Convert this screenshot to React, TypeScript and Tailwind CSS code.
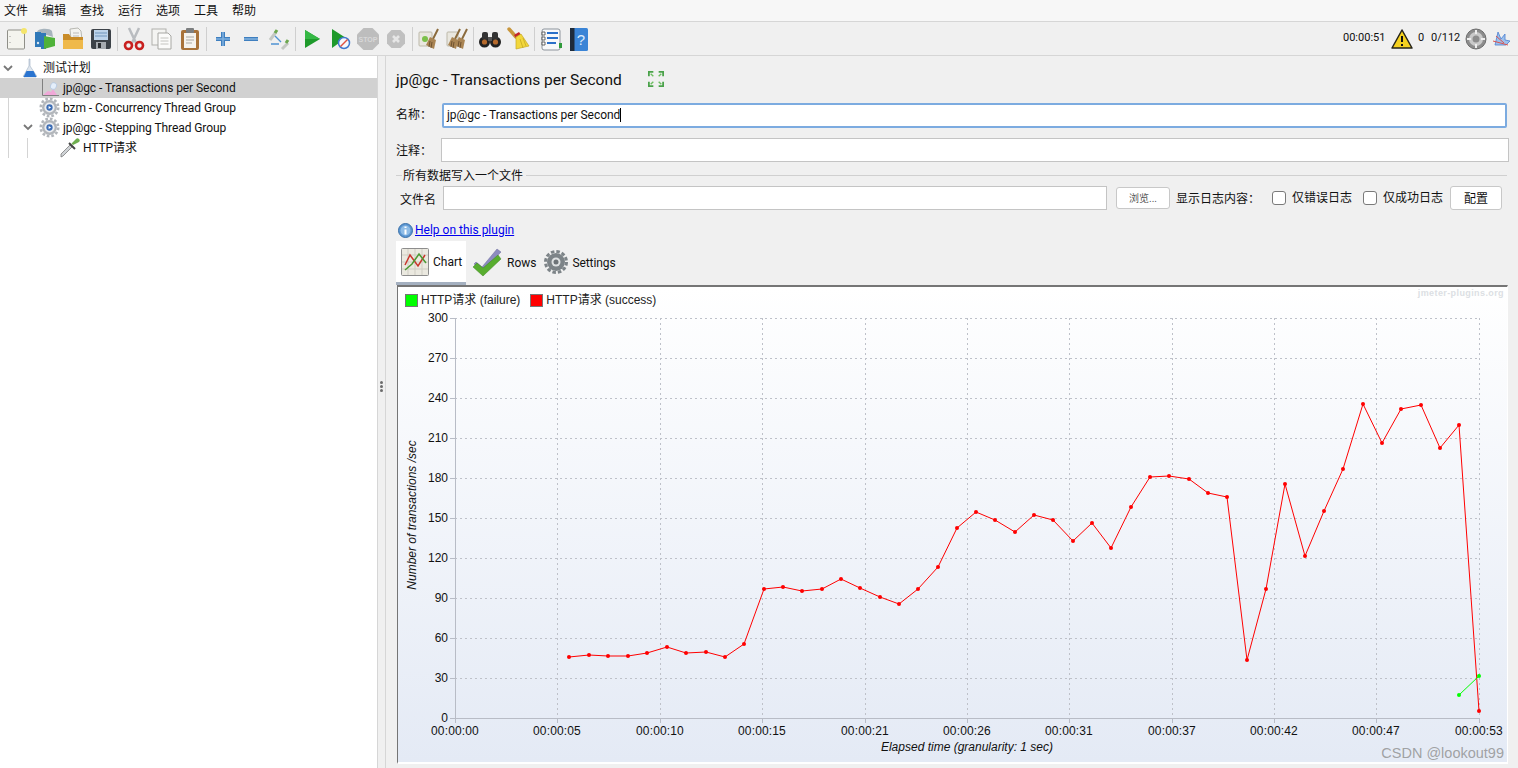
import type { ReactNode } from "react";

const menus = ["文件", "编辑", "查找", "运行", "选项", "工具", "帮助"];

const red = [
  [569, 657], [589, 655], [608, 656], [628, 656], [647, 653], [667, 647], [686, 653], [706, 652],
  [725, 657], [744, 644], [764, 589], [783, 587], [802, 591], [822, 589], [841, 579], [860, 588],
  [880, 597], [899, 604], [918, 589], [938, 567], [957, 528], [976, 512], [995, 520], [1015, 532],
  [1034, 515], [1053, 520], [1073, 541], [1092, 523], [1111, 548], [1131, 507], [1150, 477], [1169, 476],
  [1189, 479], [1208, 493], [1227, 497], [1247, 660], [1266, 589], [1285, 484], [1305, 556], [1324, 511],
  [1343, 469], [1363, 404], [1382, 443], [1401, 409], [1421, 405], [1440, 448], [1459, 425], [1479, 711],
];
const green = [[1459, 695], [1479, 676]];

const xTicks = [
  [455, "00:00:00"], [557, "00:00:05"], [660, "00:00:10"], [762, "00:00:15"], [865, "00:00:21"],
  [967, "00:00:26"], [1069, "00:00:31"], [1172, "00:00:37"], [1274, "00:00:42"], [1376, "00:00:47"], [1479, "00:00:53"],
] as const;
const yTicks = [300, 270, 240, 210, 180, 150, 120, 90, 60, 30, 0];

function Ico({ children, size = 24 }: { children: ReactNode; size?: number }) {
  return (
    <svg width={size} height={size} viewBox="0 0 24 24" className="shrink-0">
      {children}
    </svg>
  );
}

function Gear({ size = 22, c = "#b2b6bb" }: { size?: number; c?: string }) {
  return (
    <Ico size={size}>
      <circle cx="12" cy="12" r="8.500" fill={c} />
      <circle cx="12" cy="12" r="10" fill="none" stroke={c} strokeWidth="3" strokeDasharray="3 2.250" />
      <circle cx="12" cy="12" r="5.800" fill="#eceef1" />
      <circle cx="12" cy="12" r="3.600" fill="#3f6fb5" />
      <path d="M11 10.200l2.800 1.800-2.800 1.800z" fill="#fff" />
    </Ico>
  );
}

function Broom({ x = 10 }: { x?: number }) {
  return (
    <g>
      <path d={`M${x + 11} 2l-5 10`} stroke="#8a6a3c" strokeWidth="2" />
      <path d={`M${x + 3} 10l6 3-2 9-8-4z`} fill="#a98453" />
      <path d={`M${x + 3} 14l-1 6M${x + 5} 15l-1 6`} stroke="#6f5230" strokeWidth="1" />
    </g>
  );
}

const tools: ReactNode[] = [
  <Ico key="new">
    <rect x="2.500" y="3" width="17" height="19" rx="1" fill="#f4f4ee" stroke="#8f8f88" />
    <circle cx="19" cy="4" r="3" fill="#f5e56b" />
    <path d="M5 9v1M5 15v1" stroke="#999" />
  </Ico>,
  <Ico key="tmpl">
    <path d="M4 5c1-4 13-4 15-1l1 6-6-2H6z" fill="#a7b4bd" />
    <rect x="2" y="5" width="6" height="15" fill="#2f78b8" />
    <rect x="8" y="6" width="5" height="16" fill="#2f78b8" />
    <path d="M11 9l11 2v8l-11 3z" fill="#4fb23a" />
    <circle cx="5" cy="16" r="1.200" fill="#dbe8f2" />
  </Ico>,
  <Ico key="open">
    <path d="M9 2l8-1 3 3 1 9H10z" fill="#f3f3f0" stroke="#a9a9a2" strokeWidth="0.800" />
    <path d="M12 6h6M12 9h6" stroke="#bbb" />
    <path d="M2 7h6l2 3h12v11a1 1 0 01-1 1H3a1 1 0 01-1-1z" fill="#c98c28" />
    <path d="M2 13h20v8a1 1 0 01-1 1H3a1 1 0 01-1-1z" fill="#efb94a" />
  </Ico>,
  <Ico key="save">
    <rect x="2" y="2" width="20" height="20" rx="2" fill="#3c4248" />
    <rect x="5" y="3" width="14" height="10" fill="#bcd3ea" />
    <path d="M6 6h12M6 9h12" stroke="#6f94bb" />
    <rect x="7" y="15" width="10" height="7" fill="#a6abb0" />
    <rect x="9" y="16" width="3" height="5" fill="#2b2f33" />
  </Ico>,
  null,
  <Ico key="cut">
    <path d="M7 1l7 15M17 1l-7 15" stroke="#b9bcc0" strokeWidth="2.500" />
    <circle cx="6.500" cy="18.500" r="3.500" fill="none" stroke="#c8201f" strokeWidth="2.600" />
    <circle cx="17.500" cy="18.500" r="3.500" fill="none" stroke="#c8201f" strokeWidth="2.600" />
  </Ico>,
  <Ico key="copy">
    <rect x="2" y="2" width="14" height="16" fill="#f4f4f2" stroke="#b0b0ac" />
    <path d="M8 6h10l3 3v13H8z" fill="#fbfbfa" stroke="#a8a8a4" />
    <path d="M10.500 11h8M10.500 14h8M10.500 17h8" stroke="#c4c4c0" />
  </Ico>,
  <Ico key="paste">
    <rect x="3" y="3" width="18" height="20" rx="2" fill="#a8733a" />
    <rect x="6" y="6" width="12" height="15" fill="#f5f3ee" />
    <rect x="8" y="1" width="8" height="5" rx="1" fill="#7d7f80" />
    <path d="M8 10h8M8 13h8M8 16h6" stroke="#a9a9a4" />
  </Ico>,
  null,
  <Ico key="plus">
    <path d="M12 5v14M5 12h14" stroke="#3f7fbf" strokeWidth="4" />
    <path d="M12 5v14M5 12h14" stroke="#7fb0de" strokeWidth="1.600" />
  </Ico>,
  <Ico key="minus">
    <path d="M5 12h14" stroke="#3f7fbf" strokeWidth="4" />
    <path d="M5 12h14" stroke="#7fb0de" strokeWidth="1.600" />
  </Ico>,
  <Ico key="toggle">
    <path d="M3 13l6-8M15 22l6-6" stroke="#c4c8c2" strokeWidth="3" />
    <path d="M8 6l2-3M19 16l2-3" stroke="#6da84f" strokeWidth="3" />
    <path d="M8 9l6 6M4 17h8" stroke="#4f93d2" strokeWidth="1.400" fill="none" />
  </Ico>,
  null,
  <Ico key="run">
    <path d="M5 3l15 9-15 9z" fill="#1e9a2b" />
    <path d="M5 3l15 9H5z" fill="#35b845" />
  </Ico>,
  <Ico key="runno">
    <path d="M4 2l14 9-14 10z" fill="#1e9a2b" />
    <circle cx="16" cy="16" r="5.500" fill="#f5f7fb" stroke="#3f78cf" strokeWidth="1.500" />
    <path d="M12.500 19.500l7-7" stroke="#e0503f" strokeWidth="1.400" />
  </Ico>,
  <Ico key="stop">
    <path d="M7.500 1h9L23 7.500v9L16.500 23h-9L1 16.500v-9z" fill="#bdbdbd" />
    <text x="12" y="15" textAnchor="middle" fontSize="7" fontWeight="700" fill="#d8d8d8" fontFamily="Liberation Sans, sans-serif">STOP</text>
  </Ico>,
  <Ico key="shut">
    <path d="M7.500 3h9L21 7.500v9L16.500 21h-9L3 16.500v-9z" fill="#c0c0c0" />
    <path d="M9 9l6 6M15 9l-6 6" stroke="#e6e6e6" strokeWidth="2.600" />
  </Ico>,
  null,
  <Ico key="clear">
    <rect x="2" y="5" width="13" height="14" rx="1" fill="#e9e7df" stroke="#bdb9aa" />
    <circle cx="8" cy="12" r="3" fill="#7cc04a" />
    <Broom x={10} />
  </Ico>,
  <Ico key="clearall">
    <rect x="2" y="5" width="11" height="14" rx="1" fill="#e9e7df" stroke="#bdb9aa" />
    <Broom x={4} />
    <Broom x={11} />
  </Ico>,
  null,
  <Ico key="find">
    <circle cx="6.500" cy="15" r="5.500" fill="#222" />
    <circle cx="17.500" cy="15" r="5.500" fill="#222" />
    <rect x="4" y="5" width="6" height="8" rx="2" fill="#333" />
    <rect x="14" y="5" width="6" height="8" rx="2" fill="#333" />
    <rect x="10" y="10" width="4" height="4" fill="#555" />
    <circle cx="6.500" cy="15" r="2.600" fill="#b66a2c" />
    <circle cx="17.500" cy="15" r="2.600" fill="#b66a2c" />
  </Ico>,
  <Ico key="broom">
    <path d="M3 2l7 8" stroke="#c8963c" strokeWidth="3.500" strokeLinecap="round" />
    <path d="M8 8l5-3 2 3-5 3z" fill="#c4252a" />
    <path d="M10 10l5-3 8 12-13 3z" fill="#f2d73c" stroke="#c7a922" strokeWidth="0.700" />
    <path d="M14 12l3 9M17 11l3 8" stroke="#c7a922" strokeWidth="0.800" />
  </Ico>,
  null,
  <Ico key="list">
    <rect x="3" y="2" width="18" height="21" rx="2" fill="#f7f8fa" stroke="#8d949c" />
    <path d="M8 6h11M8 11h11M8 16h9" stroke="#2a6fc9" strokeWidth="1.800" />
    <path d="M3 5h3v3H3zM3 10h3v3H3zM3 15h3v3H3z" fill="#fff" stroke="#444" strokeWidth="0.800" />
    <rect x="20" y="16" width="3" height="5" fill="#2f9a3a" />
  </Ico>,
  <Ico key="help">
    <rect x="3" y="1" width="18" height="23" rx="1.500" fill="#3a84d6" />
    <rect x="3" y="1" width="4.500" height="23" fill="#1f2b3a" />
    <text x="14" y="18" textAnchor="middle" fontSize="15" fill="#dcebfb" fontFamily="Liberation Sans, sans-serif">?</text>
  </Ico>,
];

function Field({ className }: { className: string }) {
  return <div className={`bg-white border border-[#c4c4c4] ${className}`} />;
}

function Check({ label }: { label: string }) {
  return (
    <div className="flex items-center gap-[6px]">
      <span className="w-[14px] h-[14px] rounded-[3px] bg-white border border-[#7a7a7a]" />
      <span>{label}</span>
    </div>
  );
}

export default function App() {
  return (
    <div className="w-[1518px] h-[768px] overflow-hidden flex flex-col bg-[#f0f0f0] text-[#111] text-[12px] font-['Roboto','Noto_Sans_CJK_SC',sans-serif]">
      {/* menu */}
      <div className="h-[22px] shrink-0 flex items-center gap-[14px] pl-[4px] bg-[#f7f7f7] border-b border-[#d6d6d6]">
        {menus.map((m) => (
          <span key={m} className="w-[24px] text-[12px] leading-none whitespace-nowrap">{m}</span>
        ))}
      </div>

      {/* toolbar */}
      <div className="h-[34px] shrink-0 flex items-center pl-[3px] pr-[7px] border-b border-[#d6d6d6]">
        {tools.map((t, i) =>
          t ? (
            <div key={i} className="w-[28px] flex justify-center">{t}</div>
          ) : (
            <div key={i} className="w-[5px] h-[24px] flex justify-center">
              <div className="w-px bg-[#cfcfcf]" />
            </div>
          ),
        )}
        <div className="ml-auto flex items-center text-[11px]">
          <span className="w-[48px]">00:00:51</span>
          <svg width="22" height="20" viewBox="0 0 22 20" className="mr-[5px]">
            <path d="M11 1l10 18H1z" fill="#f6d21f" stroke="#26241a" strokeWidth="1.500" strokeLinejoin="round" />
            <path d="M11 7v6M11 15v2" stroke="#111" strokeWidth="2" />
          </svg>
          <span className="w-[13px]">0</span>
          <span className="w-[34px]">0/112</span>
          <svg width="22" height="22" viewBox="0 0 22 22" className="mr-[4px]">
            <circle cx="11" cy="11" r="10" fill="#8c8c8c" stroke="#6e6e6e" />
            <circle cx="11" cy="11" r="7" fill="#c9c9c9" />
            <circle cx="11" cy="11" r="3.500" fill="#8c8c8c" />
            <path d="M11 2v4M11 16v4M2 11h4M16 11h4" stroke="#eee" strokeWidth="2" />
          </svg>
          <svg width="20" height="18" viewBox="0 0 20 18">
            <path d="M4 15L7 2l3 7 4-5 0 6 5 1-4 4z" fill="#9cc0ec" stroke="#4a7fd0" strokeWidth="0.800" />
            <path d="M2 11l15 4M5 6l8 7" stroke="#d9534f" strokeWidth="1" />
          </svg>
        </div>
      </div>

      <div className="flex-1 flex min-h-0">
        {/* tree */}
        <div className="w-[377px] shrink-0 bg-white pt-[2px] relative tracking-[-0.07px]">
          <div className="absolute left-[8px] top-[22px] h-[80px] w-px bg-[#d4d4d4]" />
          <div className="absolute left-[27px] top-[82px] h-[20px] w-px bg-[#d4d4d4]" />
          <div className="h-[20px] flex items-center relative">
            <svg width="12" height="12" viewBox="0 0 12 12" className="absolute left-[2px] top-[4px]">
              <path d="M2 4l4 4 4-4" fill="none" stroke="#777" strokeWidth="1.800" />
            </svg>
            <svg width="16" height="20" viewBox="0 0 16 20" className="absolute left-[22px] top-0">
              <path d="M8 1v7l6 9a1 1 0 01-1 2H3a1 1 0 01-1-2l5-9V1z" fill="#dfe6ee" stroke="#9fb0c2" strokeWidth="0.600" />
              <path d="M4.500 13h7l3 6H1.500z" fill="#2a74d0" />
            </svg>
            <span className="ml-[43px]">测试计划</span>
          </div>
          <div className="h-[20px] flex items-center relative bg-[#d1d1d1]">
            <svg width="18" height="18" viewBox="0 0 18 18" className="absolute left-[41px] top-px">
              <path d="M1.500 0v16.500H18" fill="none" stroke="#808080" />
              <path d="M2 16l5-4 3 1 2-3 4 6z" fill="#f0a8d8" />
              <ellipse cx="12.500" cy="7" rx="3" ry="3.500" transform="rotate(30 12.500 7)" fill="#e4eefa" stroke="#a8c0de" strokeWidth="0.600" />
            </svg>
            <span className="ml-[63px]">jp@gc - Transactions per Second</span>
          </div>
          <div className="h-[20px] flex items-center relative">
            <div className="absolute left-[39px] top-[-1px]"><Gear size={21} /></div>
            <span className="ml-[63px]">bzm - Concurrency Thread Group</span>
          </div>
          <div className="h-[20px] flex items-center relative">
            <svg width="12" height="12" viewBox="0 0 12 12" className="absolute left-[22px] top-[3px]">
              <path d="M2 4l4 4 4-4" fill="none" stroke="#777" strokeWidth="1.800" />
            </svg>
            <div className="absolute left-[39px] top-[-1px]"><Gear size={21} /></div>
            <span className="ml-[63px]">jp@gc - Stepping Thread Group</span>
          </div>
          <div className="h-[20px] flex items-center relative">
            <svg width="20" height="20" viewBox="0 0 20 20" className="absolute left-[60px] top-0">
              <path d="M1 19l2-1 9-9-2-2-9 9z" fill="#cfd3d6" stroke="#6e6e6e" strokeWidth="0.700" />
              <path d="M9 5l6 6" stroke="#444" strokeWidth="2" />
              <path d="M13 7l-1.500-1.500L16 1a2 2 0 013 3z" fill="#6fae4f" />
            </svg>
            <span className="ml-[83px]">HTTP请求</span>
          </div>
        </div>

        {/* splitter */}
        <div className="w-[9px] shrink-0 border-x border-[#d6d6d6] flex flex-col items-center justify-center gap-px pb-[51px]">
          {[0, 1, 2].map((d) => (
            <span key={d} className="w-[3px] h-[3px] rounded-full bg-[#6c6c6c]" />
          ))}
        </div>

        {/* right panel */}
        <div className="flex-1 min-w-0 flex flex-col pl-[10px] pr-[10px]">
          <div className="h-[46px] shrink-0 flex items-center pt-[4px]">
            <span className="text-[15.500px] leading-none">jp@gc - Transactions per Second</span>
            <svg width="16" height="16" viewBox="0 0 18 18" className="ml-[26px] mb-[5px]">
              <path d="M1 6V1h5M12 1h5v5M17 12v5h-5M6 17H1v-5" fill="none" stroke="#4aa24a" strokeWidth="2" />
              <path d="M3 3l3 3M15 3l-3 3M15 15l-3-3M3 15l3-3" stroke="#6cbd5f" strokeWidth="1.500" />
            </svg>
          </div>

          <div className="flex items-center h-[26px] shrink-0">
            <span className="w-[47px] shrink-0">名称：</span>
            <div className="flex-1 mr-px h-[25px] bg-white border-2 border-[#7cabe0] rounded-[2px] flex items-center pl-[3px] -ml-px tracking-[-0.05px]">
              jp@gc - Transactions per Second<span className="w-px h-[14px] bg-black" />
            </div>
          </div>

          <div className="flex items-center h-[24px] shrink-0 mt-[10px] mb-[1px]">
            <span className="w-[45px] shrink-0 pt-px">注释：</span>
            <Field className="flex-1 h-[24px] -mr-px" />
          </div>

          <div className="flex items-center h-[14px] shrink-0 mt-[5px]">
            <div className="w-[6px] h-px bg-[#d0d0d0]" />
            <span className="px-[1px] pt-[2px]">所有数据写入一个文件</span>
            <div className="flex-1 h-px bg-[#d0d0d0] ml-[2px] mr-px" />
          </div>

          <div className="flex items-center h-[24px] shrink-0 mt-[4px] whitespace-nowrap">
            <span className="w-[47px] shrink-0 pl-[4px] pt-[3px]">文件名</span>
            <Field className="w-[664px] h-[24px]" />
            <div className="ml-[9px] w-[54px] h-[22px] bg-white border border-[#c8c8c8] rounded-[3px] flex items-center justify-center text-[10px] text-[#555]">浏览...</div>
            <span className="ml-[6px] w-[96px] pt-[2px]">显示日志内容：</span>
            <Check label="仅错误日志" />
            <div className="w-[11px]" />
            <Check label="仅成功日志" />
            <div className="ml-[7px] w-[52px] h-[24px] bg-white border border-[#c8c8c8] rounded-[3px] flex items-center justify-center pt-[2px]">配置</div>
          </div>

          <div className="flex items-center h-[20px] shrink-0 mt-[10px] ml-[2px]">
            <svg width="15" height="15" viewBox="0 0 15 15" className="mr-[2px]">
              <circle cx="7.500" cy="7.500" r="7" fill="#5b96d2" stroke="#3a70a8" />
              <circle cx="7.500" cy="7.500" r="5" fill="#8fbce6" />
              <path d="M7.500 3.500v1.500M7.500 6.500v5" stroke="#fff" strokeWidth="2" />
            </svg>
            <span className="text-[#0000ee] underline">Help on this plugin</span>
          </div>

          {/* tabs */}
          <div className="h-[44px] shrink-0 flex mt-px">
            <div className="w-[70px] bg-white border-b-[3px] border-[#a4b0c0] flex items-center pl-[5px]">
              <svg width="28" height="28" viewBox="0 0 28 28" className="mr-[4px]">
                <rect x="0.500" y="0.500" width="27" height="27" rx="1" fill="#ebe9e0" stroke="#8d8d8d" />
                <path d="M7 1v26M14 1v26M21 1v26M1 7h26M1 14h26M1 21h26" stroke="#cfcdc3" />
                <path d="M4 17L9 7l8 11 7-11" fill="none" stroke="#c9362c" strokeWidth="1.500" />
                <path d="M4 22l7-6 7-10 7 9" fill="none" stroke="#4c9a32" strokeWidth="1.500" />
              </svg>
              <span className="pt-px">Chart</span>
            </div>
            <div className="flex items-center pl-[6px] pb-[3px]">
              <svg width="30" height="30" viewBox="0 0 30 30" className="mr-[5px]">
                <path d="M4 15l6 5L25 2l4 3-18 19-9-7z" fill="#8d8cc0" stroke="#6a6a9a" strokeWidth="0.500" />
                <path d="M1 20l4-4 6 5L26 8l3 4-18 17z" fill="#58ad2f" stroke="#3d8420" strokeWidth="0.500" />
              </svg>
              <span className="pt-[2px]">Rows</span>
            </div>
            <div className="flex items-center pl-[8px] pb-[3px]">
              <Ico size={24}>
                <circle cx="12" cy="12" r="9" fill="#7d8488" />
                <circle cx="12" cy="12" r="10.500" fill="none" stroke="#7d8488" strokeWidth="3" strokeDasharray="3.500 2" />
                <circle cx="12" cy="12" r="4.500" fill="#dfe2e3" />
                <circle cx="12" cy="12" r="2.500" fill="#6e7478" />
              </Ico>
              <span className="ml-[4px] pt-[2px] tracking-[-0.1px]">Settings</span>
            </div>
          </div>

          {/* chart */}
          <div className="relative ml-px w-[1111px] h-[479px] shrink-0 border-t-[2px] border-l border-r border-b-[2px] border-t-[#757575] border-l-[#757575] border-r-white border-b-white bg-gradient-to-b from-white to-[#e4eaf5] flex flex-col font-['Liberation_Sans',sans-serif]">
            <div className="h-[24px] shrink-0 flex items-center pl-[7px] pt-[2px] text-[#222] font-['Liberation_Sans','Noto_Sans_CJK_SC',sans-serif]">
              <span className="w-[13px] h-[13px] bg-[#00ff00] border border-[#777] mr-[3px]" />
              <span>HTTP请求 (failure)</span>
              <span className="w-[13px] h-[13px] bg-[#ff0000] border border-[#777] ml-[10px] mr-[3px]" />
              <span>HTTP请求 (success)</span>
            </div>
            <span className="absolute right-[3px] top-0 text-[9px] font-bold tracking-[0.4px] text-[#dcdfe4]">jmeter-plugins.org</span>
            <svg width="1109" height="451" viewBox="398 311 1109 451" className="block">
              {yTicks.map((v, i) => {
                const y = 318 + i * 40;
                return (
                  <g key={v}>
                    <line x1="450" x2="455" y1={y + 0.5} y2={y + 0.5} stroke="#b8bcc6" />
                    {v > 0 && <line x1="455" x2="1479" y1={y + 0.5} y2={y + 0.5} stroke="#bec1c9" strokeDasharray="2 3" />}
                    <text x="448" y={y + 4} textAnchor="end" fontSize="12" fill="#111">{v}</text>
                  </g>
                );
              })}
              {xTicks.map(([x, label], i) => (
                <g key={label}>
                  {i > 0 && <line x1={x + 0.5} x2={x + 0.5} y1="318" y2="718" stroke="#bec1c9" strokeDasharray="2 3" />}
                  <line x1={x + 0.5} x2={x + 0.5} y1="718" y2="723" stroke="#b8bcc6" />
                  <text x={x} y="735" textAnchor="middle" fontSize="12" letterSpacing="0.15" fill="#111">{label}</text>
                </g>
              ))}
              <line x1="455.500" x2="455.500" y1="318" y2="718" stroke="#b8bcc6" />
              <line x1="455" x2="1479" y1="718.500" y2="718.500" stroke="#b8bcc6" />
              <text x="967" y="751" textAnchor="middle" fontSize="12" fontStyle="italic" fill="#111">Elapsed time (granularity: 1 sec)</text>
              <text transform="translate(416 515) rotate(-90)" textAnchor="middle" fontSize="12" fontStyle="italic" fill="#111">Number of transactions /sec</text>
              <polyline points={red.map((p) => p.join(",")).join(" ")} fill="none" stroke="#ff0000" strokeWidth="1" />
              {red.map(([x, y]) => (
                <circle key={x} cx={x} cy={y} r="2" fill="#ff0000" />
              ))}
              <polyline points={green.map((p) => p.join(",")).join(" ")} fill="none" stroke="#00ff00" strokeWidth="1" />
              {green.map(([x, y]) => (
                <circle key={x} cx={x} cy={y} r="2" fill="#00ff00" />
              ))}
            </svg>
            <span className="absolute right-[3px] bottom-[2px] text-[14.500px] leading-none text-[#8e8e8e]/80">CSDN @lookout99</span>
          </div>
        </div>
      </div>
    </div>
  );
}
